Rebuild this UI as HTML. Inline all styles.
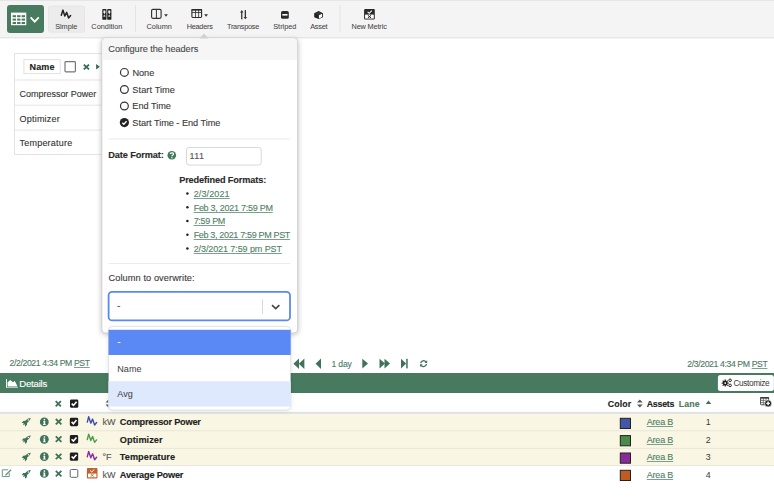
<!DOCTYPE html>
<html><head><meta charset="utf-8">
<style>
*{margin:0;padding:0;box-sizing:border-box}
html,body{width:774px;height:504px;overflow:hidden;background:#fff;position:relative;font-family:"Liberation Sans",sans-serif;color:#333}
.a{position:absolute}
.t{position:absolute;white-space:nowrap;line-height:1;z-index:10;-webkit-text-stroke:0.12px currentColor}
u{text-decoration-color:#7aa18e}
svg{position:absolute;left:0;top:0;overflow:visible}
</style></head><body>
<!-- base layer -->
<svg width="774" height="504" viewBox="0 0 774 504" style="z-index:1">
  <!-- toolbar -->
  <rect x="0" y="0" width="774" height="38.3" fill="#f4f4f4"/>
  <rect x="0" y="0" width="774" height="1" fill="#e6e6e6"/>
  <rect x="0" y="37.3" width="774" height="1" fill="#e2e2e2"/>
  <rect x="7" y="5" width="37" height="28" rx="3" fill="#477a5f"/>
  <rect x="11" y="12.6" width="15.3" height="12.6" fill="#fff"/>
  <g fill="#477a5f">
    <rect x="12.6" y="15.2" width="3.4" height="2"/><rect x="17.1" y="15.2" width="3.4" height="2"/><rect x="21.6" y="15.2" width="3.4" height="2"/>
    <rect x="12.6" y="18.6" width="3.4" height="2"/><rect x="17.1" y="18.6" width="3.4" height="2"/><rect x="21.6" y="18.6" width="3.4" height="2"/>
    <rect x="12.6" y="22" width="3.4" height="2"/><rect x="17.1" y="22" width="3.4" height="2"/><rect x="21.6" y="22" width="3.4" height="2"/>
  </g>
  <polyline points="30.6,17.4 34.7,21.6 38.8,17.4" fill="none" stroke="#fff" stroke-width="1.8"/>
  <rect x="48.5" y="6.1" width="36" height="26.1" rx="2" fill="#ececec" stroke="#e6e6e6" stroke-width="1"/>
  <path d="M61.3,15.2 L62.9,10.1 L64.8,16 L66.7,12.4 L68.6,17.9 L70.6,15.5" fill="none" stroke="#222" stroke-width="1.5" stroke-linejoin="round" stroke-linecap="round"/>
  <g fill="#222"><rect x="102.3" y="8.9" width="4.2" height="10.9" rx="0.9"/><rect x="107.2" y="8.9" width="4.2" height="10.9" rx="0.9"/></g>
  <g fill="#f4f4f4"><polygon points="103.4,10.5 105.4,10.5 105.4,12.5 104.4,14.2 103.4,12.5"/><polygon points="104.4,14.6 105.4,16.1 105.4,16.8 103.4,16.8 103.4,16.1" opacity="0.85"/><polygon points="108.3,10.5 110.3,10.5 110.3,12.5 109.3,14.2 108.3,12.5"/><polygon points="109.3,14.6 110.3,16.1 110.3,16.8 108.3,16.8 108.3,16.1" opacity="0.85"/></g>
  <rect x="135" y="5" width="1" height="27" fill="#e4e4e4"/>
  <rect x="151.6" y="9.4" width="9.5" height="8.9" rx="1.2" fill="none" stroke="#333" stroke-width="1.15"/>
  <rect x="155.9" y="9.4" width="1" height="8.9" fill="#333"/>
  <polygon points="164.1,14.3 167.9,14.3 166,16.8" fill="#333"/>
  <rect x="191.9" y="9.45" width="9.7" height="8" rx="0.9" fill="none" stroke="#2a2a2a" stroke-width="1.1"/>
  <rect x="191.6" y="9" width="10.4" height="1.6" fill="#2a2a2a"/>
  <rect x="195.1" y="9.4" width="0.8" height="8" fill="#2a2a2a"/><rect x="198.3" y="9.4" width="0.8" height="8" fill="#2a2a2a"/>
  <rect x="191.9" y="12.1" width="9.7" height="0.8" fill="#2a2a2a"/>
  <polygon points="204.2,14.3 208,14.3 206.1,16.8" fill="#333"/>
  <g fill="#333">
    <rect x="241.1" y="11.6" width="1.3" height="7.7"/><polygon points="240,12.6 243.5,12.6 241.75,10.1"/>
    <rect x="244.7" y="10.1" width="1.3" height="7.7"/><polygon points="243.6,17 247.1,17 245.35,19.3"/>
  </g>
  <rect x="281" y="11" width="7.8" height="7.8" rx="1.6" fill="#2a2a2a"/>
  <rect x="282.3" y="14" width="5.2" height="1.6" fill="#fff"/>
  <polygon points="318.6,11 323,13.2 323,17.2 318.6,19.1 314.2,17.2 314.2,13.2" fill="#222"/>
  <polygon points="318.9,15.3 322.1,13.8 322.1,16.9 318.9,18.4" fill="#fff"/><polygon points="315.2,13.7 318.6,12 321.8,13.6 318.6,15.1" fill="#3a3a3a"/>
  <rect x="339.5" y="5" width="1" height="27" fill="#e4e4e4"/>
  <rect x="364.1" y="9.1" width="10.7" height="10.5" rx="1" fill="#2a2a2a"/>
  <rect x="365.1" y="14.6" width="8.7" height="4" fill="#fff"/>
  <polyline points="367.6,11.8 369.2,13.3 371.8,10.6" fill="none" stroke="#fff" stroke-width="1.1"/>
  <path d="M367.9,15.3 L371,17.9 M371,15.3 L367.9,17.9" stroke="#222" stroke-width="1"/>

  <!-- left table -->
  <rect x="14.5" y="53.5" width="220" height="101" fill="none" stroke="#e4e4e4" stroke-width="1"/>
  <rect x="14" y="79.5" width="220" height="1" fill="#e4e4e4"/>
  <rect x="14" y="104.7" width="220" height="1" fill="#e4e4e4"/>
  <rect x="14" y="129.6" width="220" height="1" fill="#e4e4e4"/>
  <rect x="23.9" y="59.6" width="36.3" height="14" fill="none" stroke="#e2e2e2" stroke-width="1"/>
  <rect x="65" y="61.6" width="10.4" height="10.2" rx="0.8" fill="none" stroke="#777" stroke-width="1.2"/>
  <path d="M83.8,64.6 L89,69.4 M89,64.6 L83.8,69.4" stroke="#2f6c50" stroke-width="1.8"/>
  <polygon points="96.1,64 99.8,66.7 96.1,69.4" fill="#2f6c50"/>

  <!-- bottom -->
  <g fill="#3f7259">
    <polygon points="293.4,363.8 299,358.6 299,369"/><polygon points="298.8,363.8 304.4,358.6 304.4,369"/>
    <polygon points="315.6,363.8 321,358.6 321,369"/>
    <polygon points="368,363.6 362.3,358.8 362.3,368.4"/>
    <polygon points="379.5,358.8 385,363.6 379.5,368.4"/><polygon points="384.5,358.8 390,363.6 384.5,368.4"/>
    <polygon points="401,358.8 406.2,363.6 401,368.4"/><rect x="406.2" y="358.8" width="1.5" height="9.6"/>
  </g>
  <g fill="none" stroke="#3f7259" stroke-width="1.3">
    <path d="M420.7,363.2 A2.95,2.95 0 0 1 426,361.9"/>
    <path d="M426.5,364 A2.95,2.95 0 0 1 421.2,365.3"/>
  </g>
  <polygon points="424.5,362.9 427.2,362.9 427.2,360.2" fill="#3f7259"/>
  <polygon points="422.7,364.3 420,364.3 420,367" fill="#3f7259"/>

  <rect x="0" y="373" width="774" height="20" fill="#477a5f"/>
  <rect x="6" y="379" width="0.9" height="8.7" fill="#fff"/>
  <rect x="6" y="387" width="12" height="0.8" fill="#cfdcd4"/>
  <polygon points="7.6,386.4 7.6,382.2 10.4,380 12.9,382.3 14.8,381 17.6,386.4" fill="#fff"/>
  <rect x="717.9" y="375.1" width="56" height="15.9" rx="2.5" fill="#fff"/>
  <g stroke="#222" stroke-width="1.3">
    <path d="M725.2,379.6 V386.6 M721.7,383.1 H728.7 M722.7,380.6 L727.7,385.6 M727.7,380.6 L722.7,385.6"/>
  </g>
  <circle cx="725.2" cy="383.1" r="2.3" fill="#222"/>
  <circle cx="725.2" cy="383.1" r="0.9" fill="#fff"/>
  <g fill="none" stroke="#222" stroke-width="1">
    <circle cx="730.1" cy="380.3" r="1.3"/>
    <circle cx="730.1" cy="385.4" r="1.3"/>
  </g>

  <!-- header -->
  <rect x="0" y="411.9" width="774" height="2" fill="#dfe2e5"/>
  <path d="M55.7,401.2 L60.9,406.4 M60.9,401.2 L55.7,406.4" stroke="#3f7259" stroke-width="1.8"/>
  <rect x="70" y="399.6" width="8.3" height="8.2" rx="1.3" fill="#1d1d1d"/>
  <polyline points="71.7,403.6 73.5,405.4 76.6,401.8" fill="none" stroke="#fff" stroke-width="1.6"/>
  <g fill="#555">
    <polygon points="105.5,402.6 108.5,399.6 108.5,402.6"/><polygon points="105.5,404.4 108.5,404.4 108.5,407.4"/>
  </g>
  <g fill="#555">
    <polygon points="637,402.6 639.85,399.4 642.7,402.6"/><polygon points="637,404.4 642.7,404.4 639.85,407.6"/>
  </g>
  <polygon points="705.7,404 708.5,400.6 711.3,404" fill="#3f7259"/>
  <rect x="760.6" y="397.6" width="8" height="7.2" rx="0.6" fill="#fff" stroke="#333" stroke-width="0.9"/>
  <rect x="760.2" y="397.2" width="8.8" height="1.4" fill="#333"/>
  <path d="M763.3,397.6 V404.8 M766,397.6 V404.8 M760.6,400.4 H768.6 M760.6,402.6 H768.6" stroke="#555" stroke-width="0.7"/>
  <circle cx="768.1" cy="403.4" r="3.5" fill="#1e1e1e" stroke="#fff" stroke-width="0.6"/>
  <path d="M766.3,403.4 H769.9 M768.1,401.6 V405.2" stroke="#fff" stroke-width="1.4"/>

  <!-- rows -->
  <rect x="0" y="413.9" width="774" height="51.9" fill="#f9f6e4"/>
  <rect x="0" y="430.3" width="774" height="1" fill="#e8e6da"/>
  <rect x="0" y="447.9" width="774" height="1" fill="#e8e6da"/>
  <rect x="0" y="465.1" width="774" height="1" fill="#e8e6da"/>
</svg>
<!-- row icons -->
<svg width="774" height="504" viewBox="0 0 774 504" style="z-index:2">
  
  <g transform="translate(26.2,421.9)">
      <path d="M4.5,-3.9 C2.6,-3.7 0.6,-2.9 -0.9,-1.1 L-2.9,-0.9 L-4.5,1.1 L-2.3,1.3 L-3.4,3.3 L-1.3,2.3 L-1.2,4.8 L0.8,2.9 L0.9,1 C2.7,-0.5 4.3,-2.2 4.5,-3.9 Z" fill="#3f7259"/>
      <circle cx="2.2" cy="-1.9" r="0.75" fill="#f9f6e4"/>
    </g><g transform="translate(26.2,439.3)">
      <path d="M4.5,-3.9 C2.6,-3.7 0.6,-2.9 -0.9,-1.1 L-2.9,-0.9 L-4.5,1.1 L-2.3,1.3 L-3.4,3.3 L-1.3,2.3 L-1.2,4.8 L0.8,2.9 L0.9,1 C2.7,-0.5 4.3,-2.2 4.5,-3.9 Z" fill="#3f7259"/>
      <circle cx="2.2" cy="-1.9" r="0.75" fill="#f9f6e4"/>
    </g><g transform="translate(26.2,456.6)">
      <path d="M4.5,-3.9 C2.6,-3.7 0.6,-2.9 -0.9,-1.1 L-2.9,-0.9 L-4.5,1.1 L-2.3,1.3 L-3.4,3.3 L-1.3,2.3 L-1.2,4.8 L0.8,2.9 L0.9,1 C2.7,-0.5 4.3,-2.2 4.5,-3.9 Z" fill="#3f7259"/>
      <circle cx="2.2" cy="-1.9" r="0.75" fill="#f9f6e4"/>
    </g><g transform="translate(26.2,474)">
      <path d="M4.5,-3.9 C2.6,-3.7 0.6,-2.9 -0.9,-1.1 L-2.9,-0.9 L-4.5,1.1 L-2.3,1.3 L-3.4,3.3 L-1.3,2.3 L-1.2,4.8 L0.8,2.9 L0.9,1 C2.7,-0.5 4.3,-2.2 4.5,-3.9 Z" fill="#3f7259"/>
      <circle cx="2.2" cy="-1.9" r="0.75" fill="#f9f6e4"/>
    </g>
  <g transform="translate(44.3,421.9)">
      <circle cx="0" cy="0" r="4.4" fill="#3f7259"/>
      <circle cx="0.1" cy="-2.3" r="0.85" fill="#fff"/>
      <path d="M-1.1,-0.9 H0.9 V2.2 H1.4 V3 H-1.4 V2.2 H-0.7 V-0.1 H-1.1 Z" fill="#fff"/>
    </g><g transform="translate(44.3,439.3)">
      <circle cx="0" cy="0" r="4.4" fill="#3f7259"/>
      <circle cx="0.1" cy="-2.3" r="0.85" fill="#fff"/>
      <path d="M-1.1,-0.9 H0.9 V2.2 H1.4 V3 H-1.4 V2.2 H-0.7 V-0.1 H-1.1 Z" fill="#fff"/>
    </g><g transform="translate(44.3,456.6)">
      <circle cx="0" cy="0" r="4.4" fill="#3f7259"/>
      <circle cx="0.1" cy="-2.3" r="0.85" fill="#fff"/>
      <path d="M-1.1,-0.9 H0.9 V2.2 H1.4 V3 H-1.4 V2.2 H-0.7 V-0.1 H-1.1 Z" fill="#fff"/>
    </g><g transform="translate(44.3,473.4)">
      <circle cx="0" cy="0" r="4.4" fill="#3f7259"/>
      <circle cx="0.1" cy="-2.3" r="0.85" fill="#fff"/>
      <path d="M-1.1,-0.9 H0.9 V2.2 H1.4 V3 H-1.4 V2.2 H-0.7 V-0.1 H-1.1 Z" fill="#fff"/>
    </g>
  <g transform="translate(58.6,421.7)"><path d="M-2.8,-2.7 L2.8,2.7 M2.8,-2.7 L-2.8,2.7" stroke="#3f7259" stroke-width="1.8"/></g><g transform="translate(58.6,439.1)"><path d="M-2.8,-2.7 L2.8,2.7 M2.8,-2.7 L-2.8,2.7" stroke="#3f7259" stroke-width="1.8"/></g><g transform="translate(58.6,456.5)"><path d="M-2.8,-2.7 L2.8,2.7 M2.8,-2.7 L-2.8,2.7" stroke="#3f7259" stroke-width="1.8"/></g><g transform="translate(58.6,473.6)"><path d="M-2.8,-2.7 L2.8,2.7 M2.8,-2.7 L-2.8,2.7" stroke="#3f7259" stroke-width="1.8"/></g>
  <g transform="translate(74,422)">
      <rect x="-4.15" y="-4.2" width="8.3" height="8.4" rx="1.4" fill="#1d1d1d"/>
      <polyline points="-2.4,-0.1 -0.6,1.7 2.5,-1.9" fill="none" stroke="#fff" stroke-width="1.6"/>
    </g><g transform="translate(74,439.3)">
      <rect x="-4.15" y="-4.2" width="8.3" height="8.4" rx="1.4" fill="#1d1d1d"/>
      <polyline points="-2.4,-0.1 -0.6,1.7 2.5,-1.9" fill="none" stroke="#fff" stroke-width="1.6"/>
    </g><g transform="translate(74,456.6)">
      <rect x="-4.15" y="-4.2" width="8.3" height="8.4" rx="1.4" fill="#1d1d1d"/>
      <polyline points="-2.4,-0.1 -0.6,1.7 2.5,-1.9" fill="none" stroke="#fff" stroke-width="1.6"/>
    </g>
  <rect x="70.2" y="469.5" width="7.6" height="7.8" rx="1.2" fill="#fff" stroke="#555" stroke-width="0.9"/>
  <path transform="translate(86.8,421.9)" d="M0.5,0.2 L1.9,-5.2 L4,1.2 L5.8,-2.8 L7.8,3.1 L9.8,0.6" fill="none" stroke-width="1.4" stroke-linejoin="round" stroke-linecap="round" stroke="#3b4db3"/>
  <path transform="translate(86.8,439.3)" d="M0.5,0.2 L1.9,-5.2 L4,1.2 L5.8,-2.8 L7.8,3.1 L9.8,0.6" fill="none" stroke-width="1.4" stroke-linejoin="round" stroke-linecap="round" stroke="#4c9a4a"/>
  <path transform="translate(86.8,456.6)" d="M0.5,0.2 L1.9,-5.2 L4,1.2 L5.8,-2.8 L7.8,3.1 L9.8,0.6" fill="none" stroke-width="1.4" stroke-linejoin="round" stroke-linecap="round" stroke="#8a2b9e"/>
  <rect x="86.9" y="467.9" width="10.6" height="10.6" rx="1" fill="#c2612c"/>
  <rect x="88" y="473.6" width="8.4" height="3.7" fill="#fff"/>
  <polyline points="90.2,470.6 91.7,471.9 94.3,469.5" fill="none" stroke="#fff" stroke-width="1"/>
  <path d="M90.8,474 L93.6,476.8 M93.6,474 L90.8,476.8" stroke="#c2612c" stroke-width="0.9"/>
  <g fill="none" stroke="#6f9783" stroke-width="1">
    <path d="M8.2,469.8 H2.3 V476.6 H9.3 V473.2"/>
  </g>
  <path d="M10.6,469.3 L11.6,470.3 L6.6,475.3 L5,475.8 L5.5,474.2 Z" fill="#6f9783"/>
  <g stroke="#222" stroke-width="1">
    <rect x="620.3" y="418.3" width="10.2" height="10.2" fill="#4456a8"/>
    <rect x="620.3" y="435.6" width="10.2" height="10.2" fill="#4b8a4b"/>
    <rect x="620.3" y="453" width="10.2" height="10.2" fill="#8b2b99"/>
    <rect x="620.3" y="470.3" width="10.2" height="10.2" fill="#c15b22"/>
  </g>
</svg>
<!-- popup layer -->
<svg width="774" height="504" viewBox="0 0 774 504" style="z-index:5">
  <defs>
    <filter id="sh" x="-20%" y="-20%" width="140%" height="140%"><feGaussianBlur stdDeviation="2.5"/></filter>
  </defs>
  <rect x="101" y="39.5" width="197.5" height="295" rx="4" fill="rgba(0,0,0,0.22)" filter="url(#sh)"/>
  <rect x="101.8" y="37.8" width="195.8" height="295.4" rx="4" fill="#fff" stroke="#d2d2d2" stroke-width="1"/>
  <path d="M102.3,60 V42 A3.7,3.7 0 0 1 106,38.3 H293.4 A3.7,3.7 0 0 1 297.1,42 V60 Z" fill="#f6f6f6"/>
  <polygon points="199.3,38.4 204,33.6 208.7,38.4" fill="#d2d2d2"/>
  <g fill="none" stroke="#333" stroke-width="1.2">
    <circle cx="124.4" cy="72.4" r="3.9"/>
    <circle cx="124.4" cy="89.5" r="3.9"/>
    <circle cx="124.4" cy="106" r="3.9"/>
  </g>
  <circle cx="124.4" cy="122.6" r="4.6" fill="#222"/>
  <polyline points="122.3,122.7 123.8,124.2 126.6,121.2" fill="none" stroke="#fff" stroke-width="1.3"/>
  <rect x="108.5" y="138.5" width="182" height="1" fill="#ececec"/>
  <circle cx="171.8" cy="155.3" r="4.3" fill="#3f7a5c"/>
  <path d="M170.2,154 C170.2,152.5 173.5,152.3 173.5,154 C173.5,155.1 171.9,155.2 171.9,156.2" fill="none" stroke="#fff" stroke-width="1.2"/>
  <circle cx="171.9" cy="157.7" r="0.7" fill="#fff"/>
  <rect x="186.5" y="147.5" width="74.7" height="17.6" rx="2.5" fill="#fff" stroke="#d9d9d9" stroke-width="1"/>
  <g fill="#222">
    <circle cx="187.4" cy="193.6" r="1.25"/><circle cx="187.4" cy="207.2" r="1.25"/><circle cx="187.4" cy="221" r="1.25"/><circle cx="187.4" cy="234.7" r="1.25"/><circle cx="187.4" cy="248.4" r="1.25"/>
  </g>
  <rect x="108.5" y="263" width="182" height="1" fill="#ececec"/>
  <rect x="108.6" y="291.8" width="181.4" height="28.6" rx="3.5" fill="#fff" stroke="#5b88f4" stroke-width="1.8"/>
  <rect x="262" y="299.4" width="1" height="14.6" fill="#d9d9d9"/>
  <polyline points="272,305.1 275.7,308.6 279.4,305.1" fill="none" stroke="#444" stroke-width="1.6"/>
</svg>
<!-- menu layer -->
<svg width="774" height="504" viewBox="0 0 774 504" style="z-index:6">
  <rect x="108.5" y="328" width="182.2" height="83" rx="4" fill="rgba(0,0,0,0.10)" filter="url(#sh)"/>
  <rect x="108.5" y="326.5" width="182.2" height="83.5" rx="4" fill="#fff" stroke="rgba(0,0,0,0.09)" stroke-width="1"/>
  <rect x="108.5" y="329.8" width="182.2" height="25.2" fill="#5a88f5"/>
  <rect x="108.5" y="381.2" width="182.2" height="25.4" fill="#dfe9fd"/>
</svg>

<div class="t" style="left:55.13px;top:23.32px;font-size:7.3px;color:#454545;-webkit-text-stroke:0.05px currentColor">Simple</div>
<div class="t" style="left:91.34px;top:23.32px;font-size:7.3px;color:#454545;letter-spacing:0.030px;-webkit-text-stroke:0.05px currentColor">Condition</div>
<div class="t" style="left:146.44px;top:23.32px;font-size:7.3px;color:#454545;letter-spacing:0.066px;-webkit-text-stroke:0.05px currentColor">Column</div>
<div class="t" style="left:186.73px;top:23.32px;font-size:7.3px;color:#454545;letter-spacing:-0.252px;-webkit-text-stroke:0.05px currentColor">Headers</div>
<div class="t" style="left:227.03px;top:23.32px;font-size:7.3px;color:#454545;letter-spacing:-0.254px;-webkit-text-stroke:0.05px currentColor">Transpose</div>
<div class="t" style="left:273.24px;top:23.32px;font-size:7.3px;color:#454545;-webkit-text-stroke:0.05px currentColor">Striped</div>
<div class="t" style="left:310.24px;top:23.32px;font-size:7.3px;color:#454545;letter-spacing:-0.242px;-webkit-text-stroke:0.05px currentColor">Asset</div>
<div class="t" style="left:351.53px;top:23.32px;font-size:7.3px;color:#454545;letter-spacing:-0.135px;-webkit-text-stroke:0.05px currentColor">New Metric</div>
<div class="t" style="left:29.45px;top:62.78px;font-size:9px;color:#222;font-weight:700;letter-spacing:0.201px;">Name</div>
<div class="t" style="left:19.55px;top:89.68px;font-size:9px;color:#333;letter-spacing:-0.021px;">Compressor Power</div>
<div class="t" style="left:19.55px;top:114.58px;font-size:9px;color:#333;letter-spacing:0.213px;">Optimizer</div>
<div class="t" style="left:19.55px;top:138.98px;font-size:9px;color:#333;letter-spacing:0.209px;">Temperature</div>
<div class="t" style="left:108.34px;top:45.41px;font-size:9.2px;color:#4a4a4a;letter-spacing:-0.049px;">Configure the headers</div>
<div class="t" style="left:132.54px;top:68.71px;font-size:9.2px;color:#3a3a3a;letter-spacing:-0.078px;">None</div>
<div class="t" style="left:132.34px;top:85.81px;font-size:9.2px;color:#3a3a3a;letter-spacing:0.085px;">Start Time</div>
<div class="t" style="left:132.34px;top:102.31px;font-size:9.2px;color:#3a3a3a;letter-spacing:-0.025px;">End Time</div>
<div class="t" style="left:132.34px;top:118.91px;font-size:9.2px;color:#3a3a3a;letter-spacing:-0.035px;">Start Time - End Time</div>
<div class="t" style="left:108.34px;top:150.51px;font-size:9.2px;color:#2a2a2a;font-weight:700;letter-spacing:-0.103px;">Date Format:</div>
<div class="t" style="left:189.45px;top:152.08px;font-size:9px;color:#555;letter-spacing:0.416px;">111</div>
<div class="t" style="left:179.14px;top:175.91px;font-size:9.2px;color:#2a2a2a;font-weight:700;letter-spacing:-0.123px;">Predefined Formats:</div>
<div class="t" style="left:193.65px;top:190.08px;font-size:9px;color:#4f7f67;letter-spacing:0.125px;text-decoration:underline;text-decoration-color:#7aa18e">2/3/2021</div>
<div class="t" style="left:193.65px;top:203.68px;font-size:9px;color:#4f7f67;letter-spacing:-0.263px;text-decoration:underline;text-decoration-color:#7aa18e">Feb 3, 2021 7:59 PM</div>
<div class="t" style="left:193.65px;top:217.48px;font-size:9px;color:#4f7f67;letter-spacing:-0.302px;text-decoration:underline;text-decoration-color:#7aa18e">7:59 PM</div>
<div class="t" style="left:193.65px;top:231.18px;font-size:9px;color:#4f7f67;letter-spacing:-0.334px;text-decoration:underline;text-decoration-color:#7aa18e">Feb 3, 2021 7:59 PM PST</div>
<div class="t" style="left:193.65px;top:244.88px;font-size:9px;color:#4f7f67;letter-spacing:-0.092px;text-decoration:underline;text-decoration-color:#7aa18e">2/3/2021 7:59 pm PST</div>
<div class="t" style="left:108.54px;top:274.31px;font-size:9.2px;color:#3a3a3a;letter-spacing:0.094px;">Column to overwrite:</div>
<div class="t" style="left:117.15px;top:302.38px;font-size:9px;color:#444;">-</div>
<div class="t" style="left:117.55px;top:337.88px;font-size:9px;color:#fff;">-</div>
<div class="t" style="left:117.15px;top:364.58px;font-size:9px;color:#444;letter-spacing:0.135px;-webkit-text-stroke:0.05px currentColor">Name</div>
<div class="t" style="left:117.15px;top:390.38px;font-size:9px;color:#444;letter-spacing:0.180px;-webkit-text-stroke:0.05px currentColor">Avg</div>
<div class="t" style="left:9.56px;top:359.34px;font-size:8.7px;color:#4d7a63;letter-spacing:-0.390px;">2/2/2021 4:34 PM <u>PST</u></div>
<div class="t" style="left:687.27px;top:359.54px;font-size:8.7px;color:#4d7a63;letter-spacing:-0.390px;">2/3/2021 4:34 PM <u>PST</u></div>
<div class="t" style="left:331.57px;top:359.72px;font-size:8.6px;color:#4d7a63;letter-spacing:-0.211px;">1 day</div>
<div class="t" style="left:19.22px;top:379.37px;font-size:9.6px;color:#fff;letter-spacing:-0.210px;">Details</div>
<div class="t" style="left:733.38px;top:379.27px;font-size:8.3px;color:#3a3a3a;letter-spacing:-0.367px;-webkit-text-stroke:0">Customize</div>
<div class="t" style="left:607.86px;top:399.75px;font-size:8.8px;color:#222;font-weight:700;letter-spacing:0.109px;">Color</div>
<div class="t" style="left:646.76px;top:399.75px;font-size:8.8px;color:#222;font-weight:700;letter-spacing:-0.231px;">Assets</div>
<div class="t" style="left:678.66px;top:399.75px;font-size:8.8px;color:#4a7a62;font-weight:700;letter-spacing:0.152px;">Lane</div>
<div class="t" style="left:119.84px;top:418.01px;font-size:9.2px;color:#222;font-weight:700;letter-spacing:-0.214px;">Compressor Power</div>
<div class="t" style="left:102.45px;top:418.18px;font-size:9px;color:#555;letter-spacing:0.020px;">kW</div>
<div class="t" style="left:646.75px;top:418.18px;font-size:9px;color:#4f7f67;letter-spacing:-0.199px;text-decoration:underline;text-decoration-color:#7aa18e">Area B</div>
<div class="t" style="left:705.86px;top:418.35px;font-size:8.8px;color:#3a3a3a;-webkit-text-stroke:0">1</div>
<div class="t" style="left:119.84px;top:435.51px;font-size:9.2px;color:#222;font-weight:700;letter-spacing:0.045px;">Optimizer</div>
<div class="t" style="left:646.75px;top:435.68px;font-size:9px;color:#4f7f67;letter-spacing:-0.199px;text-decoration:underline;text-decoration-color:#7aa18e">Area B</div>
<div class="t" style="left:705.86px;top:435.85px;font-size:8.8px;color:#3a3a3a;-webkit-text-stroke:0">2</div>
<div class="t" style="left:119.84px;top:453.11px;font-size:9.2px;color:#222;font-weight:700;letter-spacing:0.025px;">Temperature</div>
<div class="t" style="left:102.45px;top:453.28px;font-size:9px;color:#555;">°F</div>
<div class="t" style="left:646.75px;top:453.28px;font-size:9px;color:#4f7f67;letter-spacing:-0.199px;text-decoration:underline;text-decoration-color:#7aa18e">Area B</div>
<div class="t" style="left:705.86px;top:453.45px;font-size:8.8px;color:#3a3a3a;-webkit-text-stroke:0">3</div>
<div class="t" style="left:119.84px;top:470.71px;font-size:9.2px;color:#222;font-weight:700;letter-spacing:-0.209px;">Average Power</div>
<div class="t" style="left:102.45px;top:470.88px;font-size:9px;color:#555;letter-spacing:0.020px;">kW</div>
<div class="t" style="left:646.75px;top:470.88px;font-size:9px;color:#4f7f67;letter-spacing:-0.199px;text-decoration:underline;text-decoration-color:#7aa18e">Area B</div>
<div class="t" style="left:705.86px;top:471.05px;font-size:8.8px;color:#3a3a3a;-webkit-text-stroke:0">4</div>
</body></html>
